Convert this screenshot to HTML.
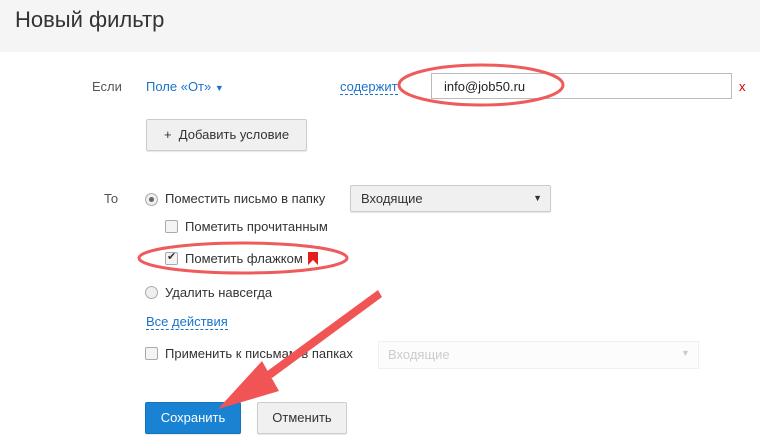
<!DOCTYPE html>
<html><head><meta charset="utf-8"><style>
body{margin:0;width:760px;height:440px;background:#fff;font-family:"Liberation Sans",Arial,sans-serif;position:relative;overflow:hidden;color:#333}
.a{position:absolute;white-space:nowrap}
.hdr{position:absolute;left:0;top:0;width:760px;height:52px;background:#f5f5f5}
.t13{font-size:13px}
.lnk{color:#1a73c8}
.btn{position:absolute;border:1px solid #ccc;background:#f0f0f0;border-radius:2px;font-size:13px;color:#333;text-align:center;box-sizing:border-box;box-shadow:0 1px 1px rgba(0,0,0,.1)}
.cb{position:absolute;width:11px;height:11px;border:1px solid #aaa;border-radius:2px;background:#f4f4f4}
.rd{position:absolute;width:11px;height:11px;border:1px solid #aaa;border-radius:50%;background:#eee}
</style></head><body>
<div class="hdr"></div>
<div class="a" style="left:15px;top:7px;font-size:22px;color:#333">Новый фильтр</div>

<div class="a t13" style="left:92px;top:79px;color:#555">Если</div>
<div class="a t13 lnk" style="left:146px;top:79px">Поле «От» <span style="font-size:9px">▼</span></div>
<div class="a t13 lnk" style="left:340px;top:79px;border-bottom:1px dashed #1a73c8;line-height:15px">содержит</div>
<div class="a" style="left:431px;top:73px;width:301px;height:26px;border:1px solid #bbb;box-sizing:border-box"></div>
<div class="a t13" style="left:444px;top:79px;color:#222">info@job50.ru</div>
<div class="a" style="left:739px;top:79px;color:#c00;font-size:13px">x</div>

<div class="btn" style="left:146px;top:119px;width:161px;height:32px;line-height:30px">+&nbsp; Добавить условие</div>

<div class="a t13" style="left:104px;top:191px;color:#555">То</div>
<div class="rd" style="left:145px;top:193px"><div style="position:absolute;left:3px;top:3px;width:5px;height:5px;border-radius:50%;background:#666"></div></div>
<div class="a t13" style="left:165px;top:191px">Поместить письмо в папку</div>
<div class="btn" style="left:350px;top:185px;width:201px;height:27px;line-height:25px;text-align:left;padding-left:10px">Входящие<span style="position:absolute;right:8px;font-size:9px">▼</span></div>

<div class="cb" style="left:165px;top:220px"></div>
<div class="a t13" style="left:185px;top:219px">Пометить прочитанным</div>
<div class="cb" style="left:165px;top:252px"><span style="position:absolute;left:1px;top:-3px;font-size:11px;color:#333">✔</span></div>
<div class="a t13" style="left:185px;top:251px">Пометить флажком</div>
<svg class="a" style="left:308px;top:252px" width="11" height="13"><path d="M0 0H10V13L5 8L0 13Z" fill="#e3201b"/></svg>

<div class="rd" style="left:145px;top:286px"></div>
<div class="a t13" style="left:165px;top:285px">Удалить навсегда</div>
<div class="a t13 lnk" style="left:146px;top:314px;border-bottom:1px dashed #1a73c8;line-height:15px">Все действия</div>

<div class="cb" style="left:145px;top:347px"></div>
<div class="a t13" style="left:165px;top:346px">Применить к письмам в папках</div>
<div class="a" style="left:378px;top:341px;width:321px;height:28px;border:1px solid #f0f0f0;background:#fcfcfc;box-sizing:border-box"></div>
<div class="a t13" style="left:388px;top:347px;color:#ccc">Входящие</div>
<div class="a" style="left:681px;top:348px;color:#ccc;font-size:9px">▼</div>

<div class="btn" style="left:145px;top:402px;width:96px;height:32px;line-height:30px;background:#1a82d2;border-color:#1573bc;color:#fff">Сохранить</div>
<div class="btn" style="left:257px;top:402px;width:90px;height:32px;line-height:30px">Отменить</div>

<svg class="a" style="left:0;top:0" width="760" height="440">
<ellipse cx="481" cy="85" rx="82" ry="20" fill="none" stroke="#ef5b5b" stroke-width="3"/>
<ellipse cx="243" cy="258" rx="104" ry="15" fill="none" stroke="#ef5b5b" stroke-width="3"/>
<polygon points="378,290 382,297 272,378 266,372" fill="#f05454"/>
<polygon points="218,409 262,361 279,391" fill="#f05454"/>
</svg>
</body></html>
